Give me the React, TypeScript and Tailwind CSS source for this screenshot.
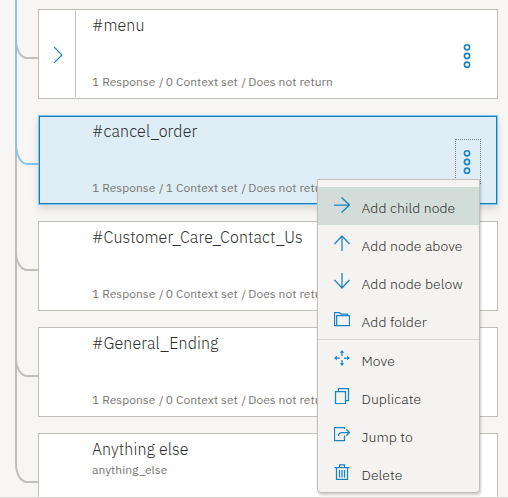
import type { ReactNode } from 'react';
import clsx from 'clsx';

type DialogNode = {
  title: string;
  detail?: string[];
  condition?: string;
  expandable?: boolean;
  selected?: boolean;
  kebab?: boolean;
};

const nodes: DialogNode[] = [
  { title: '#menu', detail: ['1 Response', '0 Context set', 'Does not return'], expandable: true, kebab: true },
  { title: '#cancel_order', detail: ['1 Response', '1 Context set', 'Does not return'], selected: true, kebab: true },
  { title: '#Customer_Care_Contact_Us', detail: ['1 Response', '0 Context set', 'Does not return'] },
  { title: '#General_Ending', detail: ['1 Response', '0 Context set', 'Does not return'] },
  { title: 'Anything else', condition: 'anything_else' },
];

function Kebab() {
  return (
    <svg className="block" width="10" height="26" viewBox="0 0 10 26" fill="none" stroke="#1a84c2" strokeWidth="1.6">
      <circle cx="5" cy="4.3" r="2.6" />
      <circle cx="5" cy="13" r="2.6" />
      <circle cx="5" cy="21.7" r="2.6" />
    </svg>
  );
}

function Rail() {
  return (
    <svg className="block shrink-0" width="38" height="498" viewBox="0 0 38 498" fill="none" strokeWidth="2">
      <g stroke="#c0bfba">
        <path d="M16 140V464A11 18 0 0 0 27 482H38" />
        <path d="M16 40A11 18 0 0 0 27 58H38" />
        <path d="M16 252A11 18 0 0 0 27 270H38" />
        <path d="M16 358A11 18 0 0 0 27 376H38" />
      </g>
      <path d="M16 0V144A11 20 0 0 0 27 164H38" stroke="#82c6f0" />
    </svg>
  );
}

function Card({ node }: { node: DialogNode }) {
  return (
    <article
      className={clsx(
        'flex h-[90px] w-[460px] shrink-0 border',
        node.selected
          ? 'border-[#7cc7ff] bg-[#deedf6] shadow-[inset_0_0_0_1px_#1a7dbb,0_4px_8px_rgba(0,0,0,0.13)]'
          : 'border-[#c0bfba] bg-white',
      )}
    >
      <div className="flex w-[37px] py-px">
        {node.expandable && (
          <div className="flex w-full items-center justify-center border-r border-[#c0bfba] pl-[2px]">
            <svg width="10" height="18" viewBox="0 0 10 18" fill="none" stroke="#1a84c2" strokeWidth="1.1">
              <path d="M1 2L9 10L1 18" />
            </svg>
          </div>
        )}
      </div>
      <div className="flex flex-1 flex-col pl-4">
        <h2 className="mt-1 text-[16px] leading-[22px] font-light tracking-[0.09px] whitespace-nowrap text-[#2d2f2c]">
          {node.title}
        </h2>
        {node.condition && <p className="mt-0.5 text-[12px] leading-4 text-[#77756f]">{node.condition}</p>}
        {node.detail && (
          <p className="mt-auto mb-2 text-[12px] leading-4 tracking-[0.05px] whitespace-nowrap text-[#77756f]">
            {node.detail.map((part, i) => (
              <span key={part}>
                {i > 0 && <span className="mr-[-0.8px] ml-[0.8px]"> / </span>}
                {part}
              </span>
            ))}
          </p>
        )}
      </div>
      {node.kebab && (
        <button
          className={clsx(
            'mt-[23px] mr-4 flex h-[45px] w-[26px] items-center justify-center border border-dotted pr-[2px]',
            node.selected ? 'border-[#777c7d]' : 'border-transparent',
          )}
        >
          <Kebab />
        </button>
      )}
    </article>
  );
}

type MenuEntry = { label: string; icon: ReactNode };

const entries: MenuEntry[] = [
  { label: 'Add child node', icon: <path d="M0 8H15.5M7.5 .5L15.5 8L7.5 15.5" /> },
  { label: 'Add node above', icon: <path d="M8 16V.7M.5 9L8 1L15.5 9" /> },
  { label: 'Add node below', icon: <path d="M8 0V15.3M.5 7L8 15L15.5 7" /> },
  {
    label: 'Add folder',
    icon: (
      <>
        <path d="M2.5 14.5H.5V1.5H5.5L7 3H13.5V4.5" />
        <path d="M2.7 14.5V4.5H15.5V14.5Z" />
      </>
    ),
  },
  {
    label: 'Move',
    icon: (
      <>
        <path d="M8 6V1M8 10V15M6 8H1M10 8H15" />
        <path d="M8 0L10.2 2.8H5.8ZM8 16L10.2 13.2H5.8ZM0 8L2.8 5.8V10.2ZM16 8L13.2 5.8V10.2Z" fill="#1a84c2" stroke="none" />
      </>
    ),
  },
  { label: 'Duplicate', icon: <path d="M1.5 3.5H11.5V15.5H1.5ZM4.5 3.5V.5H14.5V12.5H11.5" /> },
  { label: 'Jump to', icon: <path d="M10.5 3V1.5H.5V14.5H10.5V9.5M4.5 10C4.5 7.5 5.5 6.5 8 6.5H15.3M12.3 3.3L15.5 6.5L12.3 9.7" /> },
  { label: 'Delete', icon: <path d="M.5 3.5H15.5M5.5 3.5V.8H10.5V3.5M2.5 3.5V15.3H13.5V3.5M5.5 6V13.5M8 6V13.5M10.5 6V13.5" /> },
];

function MenuItem({ entry, active }: { entry: MenuEntry; active: boolean }) {
  return (
    <button className={clsx('flex h-[38px] w-full items-start pl-4 text-left', active && 'bg-[#d2dcd8]')}>
      <svg className="mt-[10px] block shrink-0" width="16" height="16" viewBox="0 0 16 16" fill="none" stroke="#1a84c2" strokeWidth="1.25">
        {entry.icon}
      </svg>
      <span className="mt-[11px] ml-[11.5px] text-[14px] leading-5 font-light tracking-[0.08px] whitespace-nowrap text-[#2d2f2c]">
        {entry.label}
      </span>
    </button>
  );
}

export default function App() {
  return (
    <main className="relative flex h-[498px] w-[508px] overflow-hidden bg-[#f7f6f5] font-['IBM_Plex_Sans',Roboto,sans-serif]">
      <Rail />
      <section className="flex flex-col gap-4 pt-[9px]">
        {nodes.map((node) => (
          <Card key={node.title} node={node} />
        ))}
      </section>
      <div className="absolute bottom-0 left-0 h-px w-full bg-[#d9d8d6]" />
      <nav className="absolute top-[179px] left-[317px] w-[163px] rounded-b-[4px] border border-[#c0bfba] bg-[#f4f3f2] pt-[7px] shadow-[1px_2px_3px_rgba(0,0,0,0.2)]">
        {entries.slice(0, 4).map((entry, i) => (
          <MenuItem key={entry.label} entry={entry} active={i === 0} />
        ))}
        <div className="h-px bg-[#d8d8d6]" />
        {entries.slice(4).map((entry) => (
          <MenuItem key={entry.label} entry={entry} active={false} />
        ))}
      </nav>
    </main>
  );
}
